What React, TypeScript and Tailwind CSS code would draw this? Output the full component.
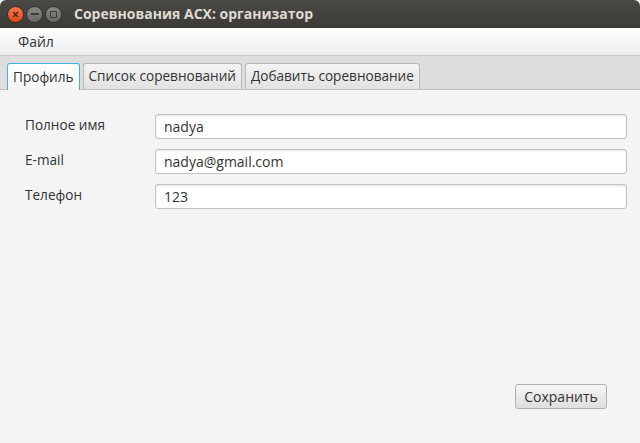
import React from "react";

export default function App() {
  const font = { fontFamily: '"Open Sans", "DejaVu Sans", sans-serif' };
  return (
    <div className="w-[640px] h-[443px] flex flex-col bg-[#f4f4f4] overflow-hidden" style={font}>
      {/* Title bar */}
      <div className="h-[28px] shrink-0 rounded-t-[6px] bg-gradient-to-b from-[#4a4944] to-[#3c3b37] flex items-center pl-[7px]">
        <div className="flex items-center gap-[2px]">
          <div className="w-[17px] h-[17px] rounded-full bg-gradient-to-b from-[#f6774f] to-[#df4a16] flex items-center justify-center border border-[#3a2a22]">
            <svg width="7" height="7" viewBox="0 0 7 7"><path d="M1 1L6 6M6 1L1 6" stroke="#4a2114" strokeWidth="1.3" /></svg>
          </div>
          <div className="w-[17px] h-[17px] rounded-full bg-gradient-to-b from-[#8a8882] to-[#6a6863] flex items-center justify-center border border-[#33322e]">
            <div className="w-[8px] h-[2px] bg-[#3c3b37]" />
          </div>
          <div className="w-[17px] h-[17px] rounded-full bg-gradient-to-b from-[#8a8882] to-[#6a6863] flex items-center justify-center border border-[#33322e]">
            <div className="w-[7px] h-[7px] border-[1.5px] border-[#3c3b37] rounded-[1px]" />
          </div>
        </div>
        <div className="ml-[12px] text-[14px] font-bold text-[#dfdbd2] leading-none">Соревнования ACX: организатор</div>
      </div>
      {/* Menu bar */}
      <div className="h-[28px] shrink-0 bg-gradient-to-b from-[#ffffff] to-[#ececec] border-b border-[#c6c6c6] flex items-center pl-[18px]">
        <span className="text-[14px] text-[#333333]">Файл</span>
      </div>
      {/* Tab header */}
      <div className="h-[34px] shrink-0 bg-[#dddddd] border-b border-[#c0c0c0] flex items-end pl-[7px] gap-[3px]">
        <div className="h-[27px] px-[5px] flex items-center bg-gradient-to-b from-[#ffffff] to-[#f4f4f4] border border-[#3fb4e4] border-b-0 rounded-t-[3px] text-[13.6px] text-[#333333] -mb-px">
          Профиль
        </div>
        <div className="h-[26px] px-[5px] flex items-center bg-gradient-to-b from-[#f4f4f4] to-[#e2e2e2] border border-[#b8b8b8] border-b-0 rounded-t-[3px] text-[13.6px] text-[#333333]">
          Список соревнований
        </div>
        <div className="h-[26px] px-[5px] flex items-center bg-gradient-to-b from-[#f4f4f4] to-[#e2e2e2] border border-[#b8b8b8] border-b-0 rounded-t-[3px] text-[13.6px] text-[#333333]">
          Добавить соревнование
        </div>
      </div>
      {/* Content */}
      <div className="flex-1 flex flex-col pl-[25px] pr-[13px] pt-[24px] pb-[34px]">
        <div className="flex flex-col gap-[10px]">
          {[
            ["Полное имя", "nadya"],
            ["E-mail", "nadya@gmail.com"],
            ["Телефон", "123"],
          ].map(([label, value]) => (
            <div key={label} className="flex items-center">
              <div className="w-[130px] text-[13.6px] text-[#333333] -mt-[3px]">{label}</div>
              <div className="flex-1 h-[25px] bg-white border border-[#c2c2c2] rounded-[3px] shadow-[inset_0_1px_2px_rgba(0,0,0,0.12)] flex items-center pl-[8px] text-[14px] text-[#333333]">
                {value}
              </div>
            </div>
          ))}
        </div>
        <div className="flex-1" />
        <div className="flex justify-end pr-[20px]">
          <div className="h-[25px] w-[92px] flex items-center justify-center bg-gradient-to-b from-[#f6f6f6] to-[#dedede] border border-[#b0b0b0] rounded-[3px] text-[14px] text-[#333333]">
            Сохранить
          </div>
        </div>
      </div>
    </div>
  );
}
